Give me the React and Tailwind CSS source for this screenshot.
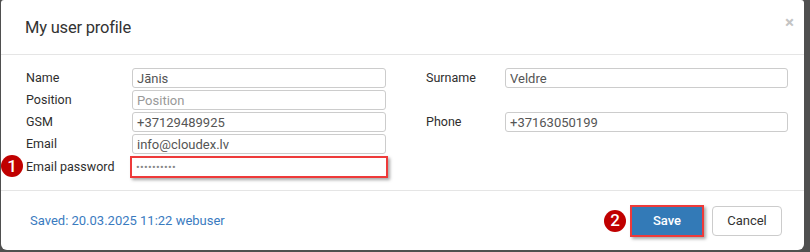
const left = [
  { label: 'Name', value: 'Jānis' },
  { label: 'Position', placeholder: 'Position' },
  { label: 'GSM', value: '+37129489925' },
  { label: 'Email', value: 'info@cloudex.lv' },
]

function Field({ value, placeholder, className = '' }) {
  return (
    <div
      className={`h-[20px] flex items-center px-[4px] rounded-[3px] border border-[#cccccc] bg-white text-[13px] leading-none ${className}`}
    >
      {value ? (
        <span className="text-[#555555]">{value}</span>
      ) : (
        <span className="text-[#999999]">{placeholder}</span>
      )}
    </div>
  )
}

function Badge({ n }) {
  return (
    <span className="w-[22px] h-[22px] rounded-full bg-[#c00000] text-white flex items-center justify-center text-[17px] leading-none font-medium">
      {n}
    </span>
  )
}

export default function App() {
  return (
    <div className="w-[810px] h-[252px] bg-[#4f4f4f] overflow-hidden font-['Roboto','Liberation_Sans',sans-serif]">
      <div className="relative ml-[1px] w-[803px] h-[250px] bg-white rounded-t-[3px] rounded-b-[6px] flex flex-col">
        {/* Header */}
        <div className="h-[55px] shrink-0 flex items-center justify-between pl-[24px] pr-[10px] border-b border-[#e5e5e5]">
          <h1 className="text-[16.5px] text-[#333333] tracking-[-0.2px] mt-[2px]">My user profile</h1>
          <span className="text-[#c4c4c4] text-[17px] font-bold leading-none -mt-[10px]">×</span>
        </div>

        {/* Body */}
        <div className="h-[136px] shrink-0 pt-[13px] pl-[25px] flex gap-[38px] border-b border-[#e5e5e5]">
          <div className="flex flex-col gap-[2px]">
            {left.map(r => (
              <div key={r.label} className="flex items-center">
                <span className="w-[106px] text-[12.5px] text-[#2e2e2e]">{r.label}</span>
                <Field value={r.value} placeholder={r.placeholder} className="w-[254px]" />
              </div>
            ))}
            <div className="relative flex items-center">
              <span className="absolute left-[-25px] top-[-1px]">
                <Badge n="1" />
              </span>
              <span className="w-[106px] text-[12.5px] text-[#2e2e2e]">Email password</span>
              <div className="w-[258px] h-[22px] -ml-[2px] border-2 border-[#ee3a3a] shadow-[2px_2px_3px_rgba(0,0,0,0.35)] flex items-center px-[4px] bg-white">
                <span className="text-[#888888] text-[11px] tracking-[0.3px] leading-none">••••••••••</span>
              </div>
            </div>
          </div>
          <div className="flex flex-col gap-[24px]">
            <div className="flex items-center">
              <span className="w-[79px] text-[12.5px] text-[#2e2e2e]">Surname</span>
              <Field value="Veldre" className="w-[283px]" />
            </div>
            <div className="flex items-center">
              <span className="w-[79px] text-[12.5px] text-[#2e2e2e]">Phone</span>
              <Field value="+37163050199" className="w-[283px]" />
            </div>
          </div>
        </div>

        {/* Footer */}
        <div className="flex-1 flex items-center justify-between pl-[29px] pr-[22px]">
          <span className="text-[13px] text-[#3a7bbf]">Saved: 20.03.2025 11:22 webuser</span>
          <div className="flex items-center">
            <Badge n="2" />
            <button className="ml-[4px] w-[74px] h-[32px] bg-[#337ab7] text-white text-[13px] font-medium border-2 border-[#ee3a3a] shadow-[2px_2px_3px_rgba(0,0,0,0.35)]">
              Save
            </button>
            <button className="ml-[8px] w-[70px] h-[30px] bg-white text-[#333333] text-[13px] rounded-[4px] border border-[#cccccc]">
              Cancel
            </button>
          </div>
        </div>
      </div>
    </div>
  )
}
